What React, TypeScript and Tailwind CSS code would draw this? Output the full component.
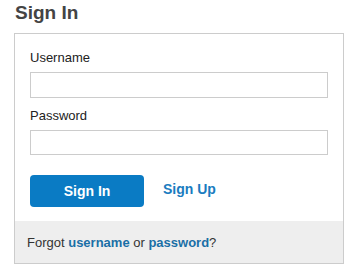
export default function App() {
  return (
    <div className="w-[358px] h-[278px] bg-white font-['Liberation_Sans',Arial,sans-serif]">
      <h1 className="pl-[15px] pt-[1px] h-[33px] text-[19px] leading-[24px] font-bold text-[#444]">Sign In</h1>
      <div className="ml-[14px] w-[330px] border border-[#cccccc]">
        <form className="px-[15px] pt-[16px] pb-[14px]">
          <label className="block text-[13px] leading-[15px] text-[#222]">Username</label>
          <input type="text" className="mt-[7px] block w-[298px] h-[26px] border border-[#cccccc] outline-none" />
          <label className="block mt-[10px] text-[13px] leading-[15px] text-[#222]">Password</label>
          <input type="password" className="mt-[7px] block w-[298px] h-[25px] border border-[#cccccc] outline-none" />
          <div className="mt-[20px] flex items-center gap-[19px]">
            <button type="button" className="w-[114px] h-[32px] rounded-[4px] bg-[#0a7bc4] text-white text-[14px] font-bold">Sign In</button>
            <a href="#" className="text-[14px] font-bold text-[#1a7cc0] -mt-[3px]">Sign Up</a>
          </div>
        </form>
        <div className="h-[42px] bg-[#eeeeee] flex items-center pl-[12px] pt-[2px] text-[13px] text-[#333]">
          Forgot&nbsp;<a href="#" className="font-bold text-[#1a6fa6]">username</a>&nbsp;or&nbsp;<a href="#" className="font-bold text-[#1a6fa6]">password</a>?
        </div>
      </div>
    </div>
  );
}
